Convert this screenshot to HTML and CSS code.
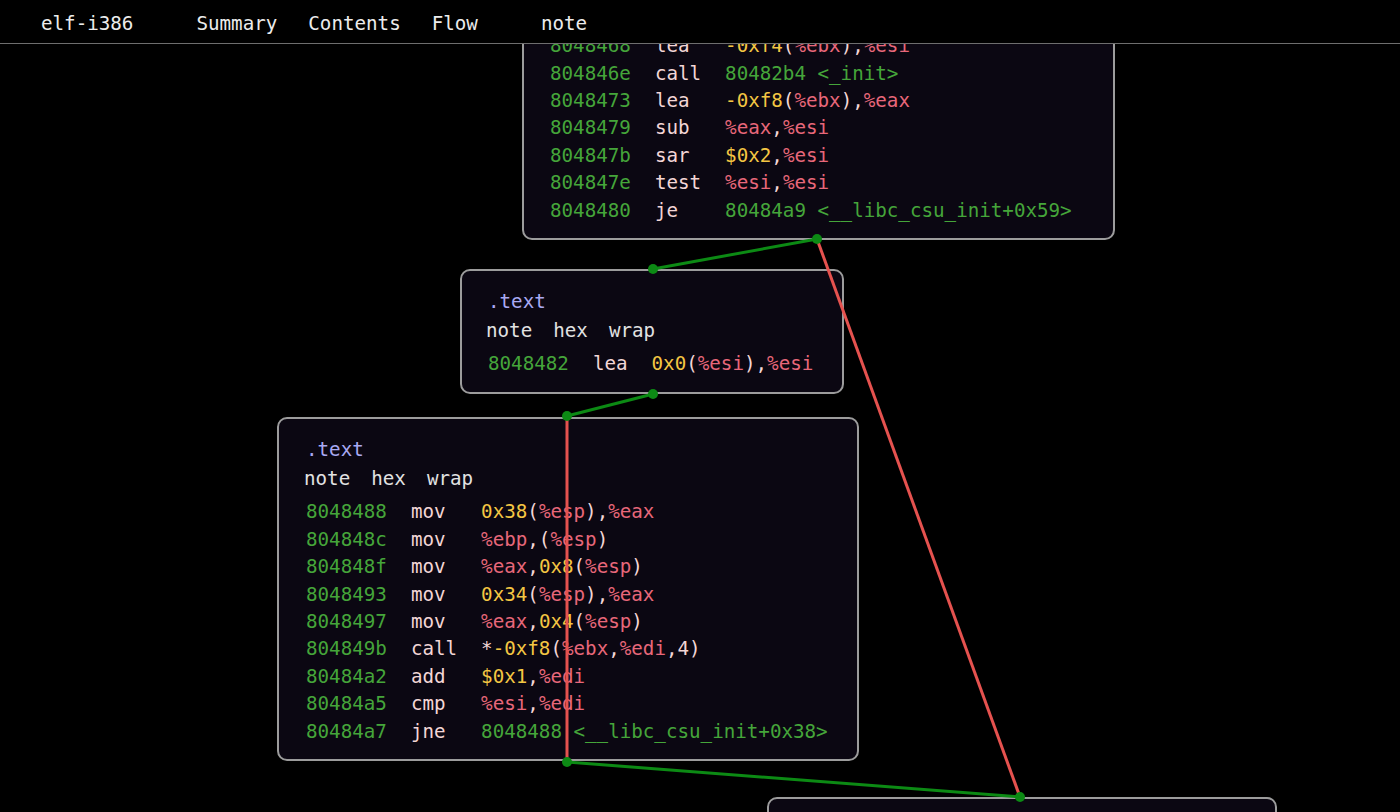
FILE: index.html
```html
<!DOCTYPE html>
<html lang="en">
<head>
  <meta charset="UTF-8">
  <meta name="viewport" content="width=device-width, initial-scale=1.0">
  <title>elf-i386 - Flow</title>
  <link rel="stylesheet" href="styles.css">
</head>
<body>

  <header class="topbar">
    <span class="brand">elf-i386</span>
    <nav class="nav">
      <a href="#">Summary</a>
      <a href="#">Contents</a>
      <a href="#">Flow</a>
    </nav>
    <span class="note-link">note</span>
  </header>

  <main class="flow">
    <!-- block ending in je -->
    <div class="block block-a">
      <div class="section">.text</div>
      <div class="tools"><span>note</span><span>hex</span><span>wrap</span></div>
      <div class="listing">
        <div class="ins"><span class="addr">8048468</span><span class="op">lea</span><span class="args"><span class="imm">-0xf4</span>(<span class="reg">%ebx</span>),<span class="reg">%esi</span></span></div>
        <div class="ins"><span class="addr">804846e</span><span class="op">call</span><span class="args"><span class="sym">80482b4 &lt;_init&gt;</span></span></div>
        <div class="ins"><span class="addr">8048473</span><span class="op">lea</span><span class="args"><span class="imm">-0xf8</span>(<span class="reg">%ebx</span>),<span class="reg">%eax</span></span></div>
        <div class="ins"><span class="addr">8048479</span><span class="op">sub</span><span class="args"><span class="reg">%eax</span>,<span class="reg">%esi</span></span></div>
        <div class="ins"><span class="addr">804847b</span><span class="op">sar</span><span class="args"><span class="imm">$0x2</span>,<span class="reg">%esi</span></span></div>
        <div class="ins"><span class="addr">804847e</span><span class="op">test</span><span class="args"><span class="reg">%esi</span>,<span class="reg">%esi</span></span></div>
        <div class="ins"><span class="addr">8048480</span><span class="op">je</span><span class="args"><span class="sym">80484a9 &lt;__libc_csu_init+0x59&gt;</span></span></div>
      </div>
    </div>

    <!-- padding block -->
    <div class="block block-b">
      <div class="section">.text</div>
      <div class="tools"><span>note</span><span>hex</span><span>wrap</span></div>
      <div class="listing">
        <div class="ins"><span class="addr">8048482</span><span class="op">lea</span><span class="args"><span class="imm">0x0</span>(<span class="reg">%esi</span>),<span class="reg">%esi</span></span></div>
      </div>
    </div>

    <!-- loop body -->
    <div class="block block-c">
      <div class="section">.text</div>
      <div class="tools"><span>note</span><span>hex</span><span>wrap</span></div>
      <div class="listing">
        <div class="ins"><span class="addr">8048488</span><span class="op">mov</span><span class="args"><span class="imm">0x38</span>(<span class="reg">%esp</span>),<span class="reg">%eax</span></span></div>
        <div class="ins"><span class="addr">804848c</span><span class="op">mov</span><span class="args"><span class="reg">%ebp</span>,(<span class="reg">%esp</span>)</span></div>
        <div class="ins"><span class="addr">804848f</span><span class="op">mov</span><span class="args"><span class="reg">%eax</span>,<span class="imm">0x8</span>(<span class="reg">%esp</span>)</span></div>
        <div class="ins"><span class="addr">8048493</span><span class="op">mov</span><span class="args"><span class="imm">0x34</span>(<span class="reg">%esp</span>),<span class="reg">%eax</span></span></div>
        <div class="ins"><span class="addr">8048497</span><span class="op">mov</span><span class="args"><span class="reg">%eax</span>,<span class="imm">0x4</span>(<span class="reg">%esp</span>)</span></div>
        <div class="ins"><span class="addr">804849b</span><span class="op">call</span><span class="args">*<span class="imm">-0xf8</span>(<span class="reg">%ebx</span>,<span class="reg">%edi</span>,4)</span></div>
        <div class="ins"><span class="addr">80484a2</span><span class="op">add</span><span class="args"><span class="imm">$0x1</span>,<span class="reg">%edi</span></span></div>
        <div class="ins"><span class="addr">80484a5</span><span class="op">cmp</span><span class="args"><span class="reg">%esi</span>,<span class="reg">%edi</span></span></div>
        <div class="ins"><span class="addr">80484a7</span><span class="op">jne</span><span class="args"><span class="sym">8048488 &lt;__libc_csu_init+0x38&gt;</span></span></div>
      </div>
    </div>

    <!-- exit block, mostly below the fold -->
    <div class="block block-d">
      <div class="section">.text</div>
      <div class="tools"><span>note</span><span>hex</span><span>wrap</span></div>
      <div class="listing">
        <div class="ins"><span class="addr">80484a9</span><span class="op">add</span><span class="args"><span class="imm">$0x1c</span>,<span class="reg">%esp</span></span></div>
      </div>
    </div>

    <!-- edges between blocks -->
    <svg class="edges" width="1400" height="768" viewBox="0 0 1400 768">
      <g class="edge-true">
        <line x1="817" y1="195" x2="653" y2="225"/>
        <line x1="653" y1="350" x2="567" y2="372"/>
        <line x1="567" y1="718" x2="1020" y2="753"/>
      </g>
      <g class="edge-false">
        <line x1="817" y1="195" x2="1020" y2="753"/>
        <line x1="567" y1="372" x2="567" y2="718"/>
      </g>
      <g class="ports">
        <circle cx="817" cy="195" r="5"/>
        <circle cx="653" cy="225" r="5"/>
        <circle cx="653" cy="350" r="5"/>
        <circle cx="567" cy="372" r="5"/>
        <circle cx="567" cy="718" r="5"/>
        <circle cx="1020" cy="753" r="5"/>
      </g>
    </svg>
  </main>

</body>
</html>
```

FILE: styles.css
```css
:root {
  --bg: #000;
  --block-bg: #0b0712;
  --block-border: #9c9c9c;
  --addr: #45a53a;
  --op: #f3d6d6;
  --reg: #e8677a;
  --imm: #f4c643;
  --section: #a9a9f2;
  --edge-true: #0c8a14;
  --edge-false: #e5524f;
}

body {
  margin: 0;
  padding: 0;
  height: 100vh;
  overflow: hidden;
  background-color: var(--bg);
  color: #ececec;
  font-family: "DejaVu Sans Mono", "Liberation Mono", monospace;
  font-size: 19.2px;
}

.topbar {
  position: relative;
  z-index: 10;
  display: flex;
  align-items: center;
  height: 40px;
  padding: 3px 0 0 41px;
  background-color: var(--bg);
  border-bottom: 1px solid #6e6e6e;
}

.brand {
  margin-right: 63px;
}

.nav {
  display: flex;
  gap: 31px;
}

.nav a {
  color: #ececec;
  text-decoration: none;
}

.note-link {
  margin-left: 63px;
}

.flow {
  position: relative;
  height: 768px;
  overflow: hidden;
}

.block {
  position: absolute;
  box-sizing: border-box;
  padding: 17px 26px 14px 27px;
  background-color: var(--block-bg);
  border: 2px solid var(--block-border);
  border-radius: 10px;
  line-height: 27.4px;
}

.block-a {
  left: 522px;
  bottom: 572px;
  width: 593px;
  padding-left: 26px;
}

.block-b {
  left: 460px;
  top: 225px;
  width: 384px;
  padding-left: 26px;
}

.block-c {
  left: 277px;
  top: 373px;
  width: 582px;
}

.block-d {
  left: 767px;
  top: 753px;
  width: 510px;
}

.section {
  color: var(--section);
}

.tools {
  display: flex;
  gap: 21px;
  margin-top: 1.6px;
  margin-left: -2px;
  color: #e2e2e2;
}

.listing {
  display: grid;
  grid-template-columns: max-content max-content 1fr;
  column-gap: 24px;
  margin-top: 6px;
  white-space: pre;
}

.ins {
  display: contents;
}

.addr {
  color: var(--addr);
}

.op,
.args {
  color: var(--op);
}

.reg {
  color: var(--reg);
}

.imm {
  color: var(--imm);
}

.sym {
  color: var(--addr);
}

.edges {
  position: absolute;
  top: 0;
  left: 0;
  z-index: 5;
  pointer-events: none;
}

.edge-true line {
  stroke: var(--edge-true);
  stroke-width: 3;
}

.edge-false line {
  stroke: var(--edge-false);
  stroke-width: 3;
}

.ports circle {
  fill: var(--edge-true);
}
```
